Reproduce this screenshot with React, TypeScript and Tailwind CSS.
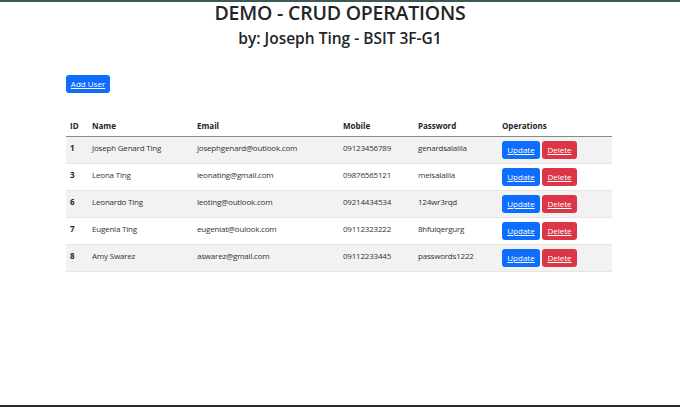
import React from 'react';

type User = { id: number; name: string; email: string; mobile: string; password: string };

const users: User[] = [
  { id: 1, name: 'Joseph Genard Ting', email: 'josephgenard@outlook.com', mobile: '09123456789', password: 'genardsalalila' },
  { id: 3, name: 'Leona Ting', email: 'leonating@gmail.com', mobile: '09876565121', password: 'meisalalila' },
  { id: 6, name: 'Leonardo Ting', email: 'leoting@outlook.com', mobile: '09214434534', password: '124wr3rqd' },
  { id: 7, name: 'Eugenia Ting', email: 'eugeniat@oulook.com', mobile: '09112323222', password: '8hfuiqergurg' },
  { id: 8, name: 'Amy Swarez', email: 'aswarez@gmail.com', mobile: '09112233445', password: 'passwords1222' },
];

const App: React.FC = () => {
  return (
    <div className="w-[680px] h-[407px] flex flex-col bg-white border-t-2 border-t-[#3d5656] border-b-2 border-b-[#2a2a2a] text-[#212529] font-['Open_Sans','Noto_Sans',sans-serif]">
      <div className="flex-1">
        <h1 className="text-center text-[19.5px] leading-[24px] font-semibold -mt-[1px] tracking-[-0.2px]">DEMO - CRUD OPERATIONS</h1>
        <h2 className="text-center text-[15.5px] leading-[20px] font-semibold mt-[3px]">by: Joseph Ting - BSIT 3F-G1</h2>

        <div className="ml-[66px] mt-[21px]">
          <button className="h-[18px] w-[44px] rounded-[3px] bg-[#0d6efd] text-white text-[8px] underline">Add User</button>
        </div>

        <table className="ml-[66px] mt-[27px] w-[546px] text-[8px] border-collapse">
          <thead>
            <tr className="border-b border-b-[#8a8a8a] h-[16px] text-left">
              <th className="w-[22px] pl-[4px] font-bold align-top">ID</th>
              <th className="w-[105px] pl-[4px] font-bold align-top">Name</th>
              <th className="w-[146px] pl-[4px] font-bold align-top">Email</th>
              <th className="w-[75px] pl-[4px] font-bold align-top">Mobile</th>
              <th className="w-[84px] pl-[4px] font-bold align-top">Password</th>
              <th className="pl-[4px] font-bold align-top">Operations</th>
            </tr>
          </thead>
          <tbody>
            {users.map((u, i) => (
              <tr key={u.id} className={`h-[27px] border-b border-b-[#e5e5e5] ${i % 2 === 0 ? 'bg-[#f2f2f2]' : 'bg-white'}`}>
                <td className="pl-[4px] pt-[5px] align-top font-bold">{u.id}</td>
                <td className="pl-[4px] pt-[5px] align-top text-[#333] tracking-[-0.2px]">{u.name}</td>
                <td className="pl-[4px] pt-[5px] align-top text-[#333] tracking-[-0.2px]">{u.email}</td>
                <td className="pl-[4px] pt-[5px] align-top text-[#333] tracking-[-0.2px]">{u.mobile}</td>
                <td className="pl-[4px] pt-[5px] align-top text-[#333] tracking-[-0.2px]">{u.password}</td>
                <td className="pl-[4px] align-middle">
                  <div className="flex gap-[2px]">
                    <button className="h-[18px] w-[38px] rounded-[3px] bg-[#0d6efd] text-white text-[8px] underline">Update</button>
                    <button className="h-[18px] w-[35px] rounded-[3px] bg-[#dc3545] text-white text-[8px] underline">Delete</button>
                  </div>
                </td>
              </tr>
            ))}
          </tbody>
        </table>
      </div>
    </div>
  );
};

export default App;
